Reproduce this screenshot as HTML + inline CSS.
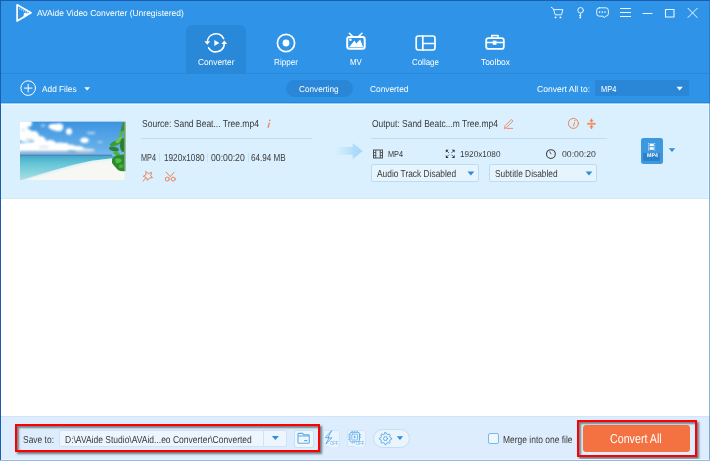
<!DOCTYPE html>
<html><head><meta charset="utf-8">
<style>
*{margin:0;padding:0;box-sizing:border-box}
html,body{width:710px;height:461px;overflow:hidden;background:#fff}
body{position:relative;font-family:"Liberation Sans",sans-serif}
.a{position:absolute}
.t{position:absolute;white-space:nowrap;line-height:1;transform-origin:0 0;text-rendering:geometricPrecision}
#hdr{left:0;top:0;width:710px;height:102px;background:#2F94E7}
#tabline{left:0;top:73px;width:710px;height:1px;background:#2A88D9}
#line102{left:0;top:102px;width:710px;height:1px;background:#2489DE}
#line103{left:0;top:103px;width:710px;height:1px;background:#98CDF4}
#line104{left:0;top:104px;width:710px;height:1px;background:#EEF9FF}
#row{left:0;top:105px;width:710px;height:94px;background:#DAF0FE}
#rowb{left:0;top:198px;width:710px;height:1px;background:#CFE9F8}
#bot{left:0;top:416px;width:710px;height:45px;background:#DDEDFD}
#botl{left:0;top:416px;width:710px;height:1px;background:#D0E5FA}
#bl{left:0;top:0;width:1px;height:461px;background:#1B5DAF}
#bt{left:0;top:0;width:710px;height:1px;background:#1B5DAF}
#br{left:709px;top:0;width:1px;height:461px;background:rgba(30,100,200,0.5)}
#bb{left:0;top:460px;width:710px;height:1px;background:#96B8E4}
.tab{left:186px;top:25px;width:60px;height:48px;background:#2A88D9;border-radius:6px 6px 0 0}
.wt{color:#fff}
</style></head><body>
<div class="a" id="hdr"></div>
<div class="a tab"></div>
<div class="a" id="tabline"></div>
<div class="a" id="line102"></div>
<div class="a" id="line103"></div>
<div class="a" id="line104"></div>
<div class="a" id="row"></div>
<div class="a" id="rowb"></div>
<div class="a" id="bot"></div>
<div class="a" id="botl"></div>

<!-- title -->

<!-- tabs labels -->

<!-- toolbar -->
<div class="a" style="left:286px;top:80px;width:67px;height:17px;border-radius:9px;background:#2A86D6"></div>
<div class="a" style="left:595px;top:80px;width:94px;height:16px;border-radius:2px;background:#2A86D6"></div>


<svg class="a" style="left:0;top:0" width="710" height="461" viewBox="0 0 710 461">
<g fill="none" stroke="#fff" stroke-linecap="round" stroke-linejoin="round">
 <!-- logo -->
 <path d="M17.1 4.8 L31 12.8 L17.1 21.1 Z" stroke-width="1.7"/>
 <!-- converter -->
 <path d="M207.4 42.3 A8.5 8.5 0 0 1 223.6 38.6" stroke-width="1.6"/>
 <path d="M208.6 47.8 A8.5 8.5 0 0 0 224.3 43.6" stroke-width="1.6"/>
 <!-- ripper -->
 <circle cx="286" cy="43" r="8.6" stroke-width="1.7"/>
 <!-- MV -->
 <rect x="347.2" y="37" width="17.5" height="11.7" rx="2.2" stroke-width="2"/>
 <path d="M349.3 33.3 L352.6 36.4 M362 33.3 L358.7 36.4" stroke-width="1.5"/>
 <!-- collage -->
 <rect x="416.2" y="36" width="18.8" height="14" rx="2.2" stroke-width="1.7"/>
 <path d="M422.8 36 V50 M422.8 43.5 H435" stroke-width="1.7"/>
 <!-- toolbox -->
 <rect x="486.2" y="38.1" width="17.6" height="10.8" rx="2.2" stroke-width="1.8"/>
 <path d="M491.8 37.5 V35.4 H498.1 V37.5" stroke-width="1.5"/>
 <path d="M486.2 42.5 H503.8" stroke-width="1.6"/>
 <!-- add files -->
 <circle cx="28.2" cy="88.1" r="7.3" stroke-width="1"/>
 <path d="M24 88.1 H32.4 M28.2 83.9 V92.3" stroke-width="1" stroke-linecap="butt"/>
 <!-- window controls -->
 <path d="M551.3 7.3 Q553 7.6 553.6 9.6 L555.2 14.8 H561.5 L562.9 9.6 H553.6" stroke-width="0.95" stroke-opacity="0.92"/>
 <circle cx="580.6" cy="10.3" r="2.8" stroke-width="0.95" stroke-opacity="0.92"/>
 <path d="M580.6 13.1 V18.4 M580.6 15.6 H579 M580.6 17.6 H579" stroke-width="0.95" stroke-opacity="0.92" stroke-linecap="butt"/>
 <path d="M599.3 7.8 H605.8 A2.6 2.6 0 0 1 608.4 10.4 V13.6 A2.6 2.6 0 0 1 605.8 16.2 H605.8 L604.2 17.9 L603.2 16.2 H599.3 A2.6 2.6 0 0 1 596.7 13.6 V10.4 A2.6 2.6 0 0 1 599.3 7.8 Z" stroke-width="0.95" stroke-opacity="0.92"/>
 <path d="M620 8.5 H631 M620 12.5 H631 M620 16.5 H631" stroke-width="1" stroke-opacity="0.92" stroke-linecap="butt"/>
 <path d="M642.5 13.5 H652.5" stroke-width="1" stroke-opacity="0.92" stroke-linecap="butt"/>
 <rect x="665.5" y="9.5" width="8.5" height="7.5" stroke-width="1.1" stroke-opacity="0.92"/>
 <path d="M688 8.3 L697.2 17.5 M697.2 8.3 L688 17.5" stroke-width="1" stroke-opacity="0.92"/>
</g>
<g fill="#fff">
 <path d="M23.9 12.9 L29.8 13.6 L23.3 18.4 Z"/>
 <circle cx="19.8" cy="8.8" r="0.6"/><circle cx="21.8" cy="9.85" r="0.6"/><circle cx="23.8" cy="10.9" r="0.6"/><circle cx="25.8" cy="11.95" r="0.6"/><circle cx="27.6" cy="12.95" r="0.6"/>
 <path d="M204.4 41.2 L210.2 41.2 L207.3 44.8 Z"/>
 <path d="M221.4 44 L227.2 44 L224.3 40.4 Z"/>
 <path d="M214.3 40 L219.4 43 L214.3 46 Z"/>
 <circle cx="286" cy="43" r="3.4"/>
 <circle cx="350.4" cy="39.8" r="1.3"/>
 <path d="M349 47.3 L354.5 40.6 L356.3 43.6 L360.2 39.4 L363.2 47.3 Z"/>
 <rect x="492.8" y="40.6" width="3.6" height="4.2"/>
 <circle cx="555.6" cy="17.4" r="0.95"/><circle cx="560.4" cy="17.4" r="0.95"/>
 <circle cx="599.6" cy="12.1" r="0.8"/><circle cx="602.3" cy="12.1" r="0.8"/><circle cx="605" cy="12.1" r="0.8"/>
 <path d="M84.3 87.2 H90 L87.15 90.6 Z"/>
 <path d="M676.5 86.8 H682.8 L679.65 90.4 Z"/>
</g>
</svg>


<!-- file row -->
<svg class="a" style="left:20px;top:121px" width="106" height="59" viewBox="0 0 106 59">
 <defs>
  <linearGradient id="sky" x1="0" y1="0" x2="0" y2="1">
   <stop offset="0" stop-color="#3B93DE"/><stop offset="0.15" stop-color="#4A9DE4"/><stop offset="0.45" stop-color="#64AFE9"/><stop offset="0.75" stop-color="#94C8EF"/><stop offset="1" stop-color="#B4D8F3"/>
  </linearGradient>
  <linearGradient id="sea" x1="0" y1="0" x2="0" y2="1">
   <stop offset="0" stop-color="#45A8C9"/><stop offset="0.3" stop-color="#62C3D6"/><stop offset="1" stop-color="#A2E0E2"/>
  </linearGradient>
  <filter id="bl1" x="-30%" y="-30%" width="160%" height="160%"><feGaussianBlur stdDeviation="1.1"/></filter>
  <filter id="bl2" x="-30%" y="-30%" width="160%" height="160%"><feGaussianBlur stdDeviation="0.8"/></filter>
  <filter id="bl3" x="-30%" y="-30%" width="160%" height="160%"><feGaussianBlur stdDeviation="0.4"/></filter>
 </defs>
 <rect width="106" height="59" fill="url(#sky)"/>
 <!-- big cloud -->
 <g filter="url(#bl1)" fill="#fff">
  <ellipse cx="2" cy="4" rx="6" ry="7"/>
  <ellipse cx="5" cy="14" rx="8" ry="7"/>
  <ellipse cx="14" cy="15" rx="5" ry="5"/>
  <ellipse cx="20" cy="20" rx="6" ry="5"/>
  <ellipse cx="12" cy="25" rx="13" ry="4"/>
  <ellipse cx="30" cy="23" rx="6" ry="4"/>
  <ellipse cx="40" cy="25" rx="7" ry="3.5"/>
  <ellipse cx="50" cy="26.5" rx="6" ry="3"/>
  <ellipse cx="30" cy="28" rx="18" ry="2.5"/>
  <rect x="-2" y="22" width="50" height="9"/>
  <ellipse cx="8" cy="2" rx="4" ry="4"/>
  <ellipse cx="65" cy="29.5" rx="10" ry="2" opacity="0.8"/>
 </g>
 <g filter="url(#bl2)" fill="#C9DCEE" opacity="0.6">
  <ellipse cx="9" cy="19" rx="4" ry="2"/>
  <ellipse cx="24" cy="26" rx="5" ry="1.5"/>
  <ellipse cx="3" cy="9" rx="2" ry="1.5"/>
 </g>
 <!-- small clouds -->
 <g filter="url(#bl2)" fill="#fff">
  <path d="M28 5 Q31 2 36 3 Q40 1 43 4 Q44 8 41 10 Q37 11 33 9 Q29 8 28 5 Z"/>
  <ellipse cx="49" cy="10.5" rx="3" ry="3.2"/>
  <ellipse cx="64.5" cy="19.3" rx="4.2" ry="2.8"/>
  <ellipse cx="58" cy="27.5" rx="6" ry="2.5"/>
 </g>
 <g filter="url(#bl2)" fill="#fff" opacity="0.45">
  <ellipse cx="71" cy="12" rx="4.5" ry="1.4"/>
  <ellipse cx="23" cy="4.5" rx="2.5" ry="1.5"/>
  <ellipse cx="80" cy="21" rx="3" ry="1"/>
 </g>
 <!-- horizon haze -->
 <rect x="0" y="29.5" width="75" height="4.5" fill="#8FABC8" opacity="0.5" filter="url(#bl2)"/>
 <rect x="0" y="33.6" width="92" height="1.6" fill="#3F80BA" opacity="0.85"/>
 <!-- sea -->
 <path d="M0 35 H94 V37.5 L72 39.5 L55 43 L30 50 L0 58 Z" fill="url(#sea)"/>
 <!-- surf + sand -->
 <path d="M2 59 L28 51 L53 44 L72 39.8 L92 37.2 L106 37 V59 Z" fill="#E6F5F4" filter="url(#bl3)"/>
 <path d="M6 59 L35 51.5 L55 46 L75 41.5 L92 39.5 L106 39 V59 Z" fill="#F7F7F3" filter="url(#bl3)"/>
 <!-- palm -->
 <g filter="url(#bl3)">
  <ellipse cx="103" cy="7" rx="1.8" ry="7" fill="#3E8E3A" transform="rotate(12 103 7)"/>
  <ellipse cx="101.5" cy="13" rx="1.6" ry="4" fill="#5DB24A" transform="rotate(35 101.5 13)"/>
  <ellipse cx="96" cy="22" rx="6.5" ry="2.4" fill="#3E9A3B" transform="rotate(-20 96 22)"/>
  <ellipse cx="99" cy="19" rx="4" ry="2" fill="#6CC556" transform="rotate(-40 99 19)"/>
  <ellipse cx="94" cy="28" rx="5" ry="2.2" fill="#2F8030" transform="rotate(15 94 28)"/>
  <ellipse cx="103" cy="24" rx="3" ry="7" fill="#2E7E30"/>
  <ellipse cx="97" cy="33" rx="4" ry="2" fill="#4FB044" transform="rotate(35 97 33)"/>
  <path d="M92 38 Q95 34 100 34 Q104 33 106 34 V50 Q101 51 98 49 Q94 45 92 42 Z" fill="#2F8A30"/>
  <path d="M95 38 Q99 36 102 39 Q100 43 96 42 Z" fill="#4CC044"/>
  <path d="M99 44 Q102 42 104 45 Q102 48 99 47 Z" fill="#44AE3E"/>
  <rect x="104" y="0" width="2" height="50" fill="#3A8A36"/>
 </g>
 <rect x="104.5" y="0" width="1.5" height="59" fill="#DCE6EA" opacity="0.6"/>
 <rect x="0" y="0" width="106" height="1" fill="#CFE4F6" opacity="0.7"/>
</svg>

<div class="a" style="left:141px;top:138px;width:171px;height:1px;background:#BEDDF5"></div>
<div class="a" style="left:371px;top:138px;width:236px;height:1px;background:#BEDDF5"></div>

<div class="a" style="left:159px;top:153px;width:1px;height:9px;background:#C7E2F6"></div>
<div class="a" style="left:207px;top:153px;width:1px;height:9px;background:#C7E2F6"></div>
<div class="a" style="left:248px;top:153px;width:1px;height:9px;background:#C7E2F6"></div>


<div class="a" style="left:371px;top:164px;width:108px;height:18px;border:1px solid #BCDCF4;border-radius:2px;background:#E6F4FE"></div>
<div class="a" style="left:489px;top:164px;width:108px;height:18px;border:1px solid #BCDCF4;border-radius:2px;background:#E6F4FE"></div>

<div class="a" style="left:641px;top:138px;width:22px;height:26px;border-radius:2.5px;background:#3C98DF"></div>
<div class="a" style="left:643.2px;top:153px;width:17px;height:7.7px;border-radius:1px;background:#2C80C8"></div>
<div class="t" style="left:646.8px;top:153.6px;font-size:5.6px;color:#fff;font-weight:bold;transform:scaleX(0.95)">MP4</div>

<svg class="a" style="left:0;top:0" width="710" height="461" viewBox="0 0 710 461">
 <defs>
  <linearGradient id="arr" x1="0" y1="0" x2="1" y2="0">
   <stop offset="0" stop-color="#BCE0FA" stop-opacity="0"/><stop offset="0.7" stop-color="#B0DBFA"/><stop offset="1" stop-color="#A3D6F8"/>
  </linearGradient>
 </defs>
 <path d="M334 147 H352.7 V143 L362.6 151.1 L352.7 159.2 V154.7 H334 Z" fill="url(#arr)"/>
 <g fill="none" stroke="#EF8256" stroke-linecap="round" stroke-linejoin="round">
  <path d="M146.2 171.6 L148.3 173.7 L151.5 172.4 L150.8 175.7 L152.5 177.7 L149.4 178 L147.6 180.4 L146.4 177.7 L143.2 176.4 L145.7 174.8 Z" stroke-width="1"/>
  <path d="M143 181 L145.6 178.6" stroke-width="1"/>
  <circle cx="167.3" cy="179.1" r="2" stroke-width="1"/>
  <circle cx="173.2" cy="179.1" r="2" stroke-width="1"/>
  <path d="M166.2 172.2 L170.2 176.7 L174.1 172.2" stroke-width="1"/>
  <path d="M504.4 128.4 L505 125.8 L511.3 119.5 L512.9 121.1 L506.6 127.4 Z M506.8 128.4 H512.6" stroke-width="0.9"/>
  <circle cx="573.4" cy="123.4" r="5" stroke-width="1"/>
  <path d="M587.2 123.8 H595.6" stroke="#F29A66" stroke-width="2.2" stroke-linecap="butt"/><path d="M591.5 118.8 V121 M591.5 126.6 V128.9" stroke-width="1.3" stroke-linecap="butt"/>
 </g>
 <g fill="#EE7B4F">
  <path d="M268.7 122.4 L270 122.4 L268.8 127.7 L267.4 127.7 Z" fill="#F08552"/><circle cx="269.7" cy="120.3" r="0.85" fill="#F08552"/>
  <path d="M574.2 122 L575 122 L574 126.2 L573 126.2 Z"/><circle cx="574.9" cy="120.6" r="0.65"/>
  <path d="M589.3 120.3 H593.7 L591.5 122.6 Z M589.3 127.3 H593.7 L591.5 125 Z"/>
 </g>
 <g fill="none" stroke="#444" stroke-width="0.9">
  <rect x="373.5" y="150" width="9" height="8" />
  <path d="M375.8 150 V158 M380.2 150 V158 M373.5 152.6 H375.8 M373.5 155.4 H375.8 M380.2 152.6 H382.5 M380.2 155.4 H382.5"/>
  
  <circle cx="550.9" cy="154.1" r="4.4" stroke-width="1.1"/>
  <path d="M549.5 151.4 L551.2 154.2"/>
 </g>
 <g fill="#2A2A2A">
  <path d="M445.8 149.7 H448.6 L445.8 152.5 Z"/><path d="M454.6 149.7 H451.8 L454.6 152.5 Z"/>
  <path d="M445.8 157.9 H448.6 L445.8 155.1 Z"/><path d="M454.6 157.9 H451.8 L454.6 155.1 Z"/>
 </g>
 <g stroke="#555" stroke-width="0.9" fill="none">
  <path d="M447 151 L449 153 M453.4 151 L451.4 153 M447 156.6 L449 154.6 M453.4 156.6 L451.4 154.6"/>
 </g>
 <g fill="#2D8CE0">
  <path d="M467.5 171.6 H474.3 L470.9 175.4 Z"/>
  <path d="M585.6 171.6 H592.4 L589 175.4 Z"/>
  <path d="M668.8 148.2 H675.2 L672 152 Z"/>
 </g>
 <g fill="#fff">
  <rect x="649.6" y="143.6" width="4.2" height="2.6"/><rect x="649.6" y="147.2" width="4.2" height="2.6"/>
  <rect x="648.1" y="143.2" width="0.9" height="1"/><rect x="648.1" y="145.4" width="0.9" height="1"/><rect x="648.1" y="147.6" width="0.9" height="1"/><rect x="648.1" y="149.6" width="0.9" height="0.9"/>
  <rect x="654.3" y="143.2" width="0.9" height="1"/><rect x="654.3" y="145.4" width="0.9" height="1"/><rect x="654.3" y="147.6" width="0.9" height="1"/><rect x="654.3" y="149.6" width="0.9" height="0.9"/>
 </g>
</svg>


<!-- bottom bar -->
<div class="a" style="left:59px;top:430px;width:228px;height:17px;border:1px solid #CFE3F5;border-radius:2px;background:#EDF6FE"></div>
<div class="a" style="left:263px;top:431px;width:1px;height:15px;background:#CFE3F5"></div>
<div class="a" style="left:294px;top:430px;width:20px;height:18px;border:1px solid #C9E0F5;border-radius:2px;background:#EEF7FE"></div>
<div class="a" style="left:322.5px;top:430px;width:17px;height:17px;border:1px solid #D3E6F8;border-radius:2px;background:#E8F4FE"></div>
<div class="a" style="left:346.5px;top:430px;width:19px;height:17px;border:1px solid #D3E6F8;border-radius:2px;background:#E8F4FE"></div>
<div class="a" style="left:373px;top:429px;width:37px;height:19px;border:1px solid #C3DDF3;border-radius:10px;background:#E9F4FD"></div>
<div class="a" style="left:488px;top:433px;width:11px;height:11px;border:1px solid #7DB6E8;border-radius:2px;background:#EEF6FE"></div>
<div class="a" style="left:583px;top:425px;width:107px;height:27px;border-radius:3px;background:#F47241"></div>
<div class="a" style="left:15px;top:424px;width:305px;height:28px;border:2px solid #FF0000;box-shadow:2px 2px 2px rgba(40,40,40,0.6), inset 2px 2px 2px rgba(40,40,40,0.55)"></div>
<div class="a" style="left:577px;top:420px;width:120px;height:37px;border:2px solid #FF0000;box-shadow:2px 2px 2px rgba(40,40,40,0.6), inset 2px 2px 2px rgba(40,40,40,0.55)"></div>
<svg class="a" style="left:0;top:0" width="710" height="461" viewBox="0 0 710 461">
 <g fill="#2D8CE0">
  <path d="M271.9 435.9 H278.9 L275.4 440.1 Z"/>
  <path d="M396.8 436.2 H403.1 L399.95 440.1 Z"/>
 </g>
 <g fill="none" stroke="#62ACE6" stroke-width="1.1" stroke-linejoin="round" stroke-linecap="round">
  <path d="M298 436 V434.2 Q298 433.4 298.8 433.4 H302.6 L303.8 434.8 H308.4 Q309.3 434.8 309.3 435.7 V442.4 Q309.3 443.2 308.4 443.2 H298.8 Q298 443.2 298 442.4 Z M298 436 H309.3"/>
  <path d="M304.5 440.6 H307"/>
  <path d="M331.5 430.8 L325.2 437.6 H329.1 L325.8 444.2 L331.9 437.8 H328.2 Z" stroke="#62ADE9" stroke-width="0.95" fill="none"/>
  <rect x="349.9" y="432.3" width="9.6" height="9.6" rx="1.6" stroke="#66B0EA" stroke-width="1"/>
  <rect x="351.8" y="434.2" width="5.8" height="5.8" rx="0.6" stroke="#66B0EA" stroke-width="0.8"/>
  <path d="M352.3 430.8 V432 M354.7 430.8 V432 M357.1 430.8 V432 M348.3 434.7 H349.6 M348.3 437.1 H349.6 M348.3 439.5 H349.6 M359.8 434.7 H361.1 M359.8 437.1 H361.1 M352.3 442.2 V443.4 M354.7 442.2 V443.4" stroke="#66B0EA" stroke-width="0.9" stroke-linecap="butt"/>
  <g transform="translate(385.5 438.6) scale(0.9) translate(-386.6 -438.3)"><path d="M386 431.6 L387.3 431.7 L387.8 433.3 L389.3 434 L390.8 433.2 L391.8 434.1 L391.2 435.6 L391.9 437.2 L393.5 437.7 L393.5 439 L391.9 439.5 L391.2 441.1 L391.8 442.6 L390.8 443.5 L389.3 442.7 L387.8 443.4 L387.3 445 L386 445 L385.5 443.4 L384 442.7 L382.5 443.5 L381.5 442.6 L382.1 441.1 L381.4 439.5 L379.8 439 L379.8 437.7 L381.4 437.2 L382.1 435.6 L381.5 434.1 L382.5 433.2 L384 434 L385.5 433.3 Z" stroke="#5AA8E8" stroke-width="1"/>
  <circle cx="386.6" cy="438.3" r="2.2" stroke="#5AA8E8" stroke-width="1"/></g>
 </g>
 <path d="M353.9 435.6 L356.2 437.1 L353.9 438.6 Z" fill="#66B0EA"/>
</svg>
<div class="a" style="left:329.4px;top:441.6px;width:9px;height:5px;background:#EAF5FE"></div><div class="t" style="left:329.8px;top:441.6px;font-size:5.8px;color:#6FB4EA;transform:scaleX(0.72)">OFF</div>
<div class="a" style="left:355.3px;top:441.6px;width:9px;height:5px;background:#EAF5FE"></div><div class="t" style="left:355.8px;top:441.6px;font-size:5.8px;color:#6FB4EA;transform:scaleX(0.72)">OFF</div>

<div class="t" style="left:37.30px;top:8.62px;font-size:8.65px;transform:scaleX(0.9814);color:#fff;">AVAide Video Converter (Unregistered)</div>
<div class="t" style="left:198.30px;top:57.62px;font-size:8.65px;transform:scaleX(0.9632);color:#fff;">Converter</div>
<div class="t" style="left:273.81px;top:57.62px;font-size:8.65px;transform:scaleX(0.9441);color:#fff;">Ripper</div>
<div class="t" style="left:350.30px;top:57.62px;font-size:8.65px;transform:scaleX(0.9100);color:#fff;">MV</div>
<div class="t" style="left:412.36px;top:57.62px;font-size:8.65px;transform:scaleX(0.9177);color:#fff;">Collage</div>
<div class="t" style="left:480.81px;top:57.62px;font-size:8.65px;transform:scaleX(0.9737);color:#fff;">Toolbox</div>
<div class="t" style="left:42.30px;top:84.62px;font-size:8.65px;transform:scaleX(0.9614);color:#fff;">Add Files</div>
<div class="t" style="left:299.32px;top:84.62px;font-size:8.65px;transform:scaleX(0.9515);color:#fff;">Converting</div>
<div class="t" style="left:369.83px;top:84.62px;font-size:8.65px;transform:scaleX(0.9648);color:#fff;">Converted</div>
<div class="t" style="left:537.31px;top:84.62px;font-size:8.65px;transform:scaleX(0.9888);color:#fff;">Convert All to:</div>
<div class="t" style="left:601.37px;top:84.62px;font-size:8.65px;transform:scaleX(0.8616);color:#fff;">MP4</div>
<div class="t" style="left:141.74px;top:120.38px;font-size:10.09px;transform:scaleX(0.8449);color:#3a3a3a;">Source: Sand Beat... Tree.mp4</div>
<div class="t" style="left:371.71px;top:120.38px;font-size:10.09px;transform:scaleX(0.8387);color:#3a3a3a;">Output: Sand Beatc...m Tree.mp4</div>
<div class="t" style="left:141.31px;top:154.38px;font-size:10.09px;transform:scaleX(0.7212);color:#3a3a3a;">MP4</div>
<div class="t" style="left:163.85px;top:154.38px;font-size:10.09px;transform:scaleX(0.8125);color:#3a3a3a;">1920x1080</div>
<div class="t" style="left:210.64px;top:154.38px;font-size:10.09px;transform:scaleX(0.8606);color:#3a3a3a;">00:00:20</div>
<div class="t" style="left:251.23px;top:154.38px;font-size:10.09px;transform:scaleX(0.8047);color:#3a3a3a;">64.94 MB</div>
<div class="t" style="left:388.37px;top:149.62px;font-size:8.65px;transform:scaleX(0.8495);color:#3a3a3a;">MP4</div>
<div class="t" style="left:459.84px;top:149.62px;font-size:8.65px;transform:scaleX(0.9479);color:#3a3a3a;">1920x1080</div>
<div class="t" style="left:562.30px;top:149.62px;font-size:8.65px;transform:scaleX(1.0063);color:#3a3a3a;">00:00:20</div>
<div class="t" style="left:377.12px;top:170.38px;font-size:10.09px;transform:scaleX(0.8316);color:#3a3a3a;">Audio Track Disabled</div>
<div class="t" style="left:494.81px;top:170.38px;font-size:10.09px;transform:scaleX(0.8268);color:#3a3a3a;">Subtitle Disabled</div>
<div class="t" style="left:23.19px;top:436.38px;font-size:10.09px;transform:scaleX(0.8378);color:#3a3a3a;">Save to:</div>
<div class="t" style="left:64.83px;top:436.38px;font-size:10.09px;transform:scaleX(0.8428);color:#3a3a3a;">D:\AVAide Studio\AVAid...eo Converter\Converted</div>
<div class="t" style="left:502.86px;top:436.38px;font-size:10.09px;transform:scaleX(0.8391);color:#3a3a3a;">Merge into one file</div>
<div class="t" style="left:610.08px;top:431.92px;font-size:12.99px;transform:scaleX(0.8227);color:#fff;">Convert All</div>
<!-- borders -->
<div class="a" style="left:0;top:459px;width:710px;height:1px;background:#EAF4FE"></div>
<div class="a" style="left:708px;top:105px;width:1px;height:93px;background:#EAF8FF"></div>
<div class="a" id="bl"></div>
<div class="a" id="bt"></div>
<div class="a" id="br"></div>
<div class="a" id="bb"></div>
</body></html>
